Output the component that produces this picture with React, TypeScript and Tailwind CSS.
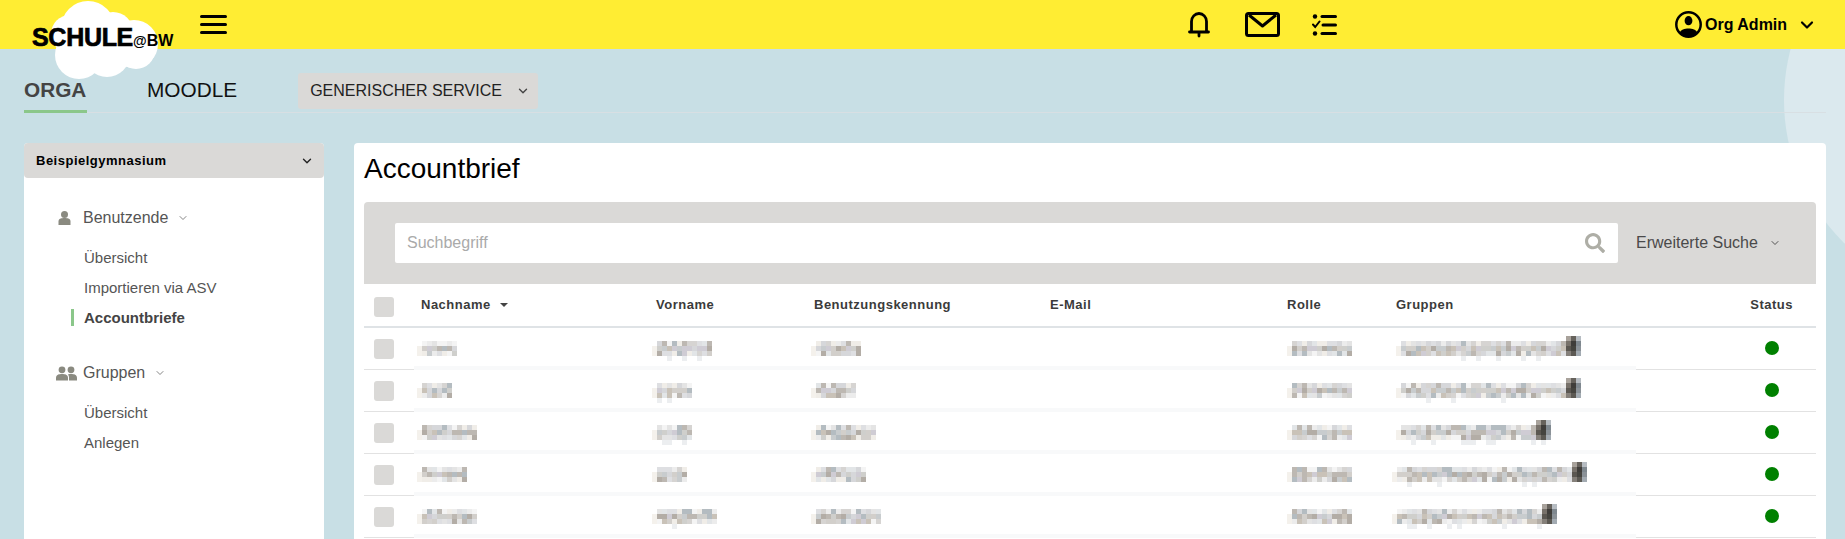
import { ChevronDown } from "lucide-react";
import { FaSearch } from "react-icons/fa";

/* ---- the blurred-out cells are a pixel mosaic in the screenshot ---- */
const MOSAIC = ["#bdb8b2", "#c8ccce", "#d2cfcb", "#b4bcc1", "#cfcfcc", "#c9c2b8", "#d6d7da", "#cfccd4", "#b3ada6"];
const FAINT = ["#f4f4f4", "#ececec", "#e4e4e4", "#dedfe2", "#f0ede8", "#e2e5e7", "#d6d4d2"];
const PATCH = [
  ["#a8a29b", "#77716a", "#5b5751", "#85807a"],
  ["#66625c", "#3f3d3a", "#45443f", "#5c5953"],
  ["#b6bcc2", "#7f888f", "#8b9298", "#a3abb2"],
];

function Mosaic({ width, seed, dark = false, descender = false }: { width: number; seed: number; dark?: boolean; descender?: boolean }) {
  const cols = Math.round(width / 5);
  const rects = [];
  let s = seed * 7919 + 13;
  const next = () => {
    s = (s * 16807 + 11) % 2147483647;
    return s;
  };
  for (let c = 0; c < cols; c++) {
    const patchCol = dark ? c - (cols - 3) : -1;
    for (let r = 0; r < 5; r++) {
      const n = (next() >> 4) & 0xffff;
      let fill = "";
      if (patchCol >= 0 && r < 4) fill = PATCH[patchCol][r];
      else if (c === 0) fill = r === 2 || r === 3 ? "#f4f1ec" : "";
      else if (r === 2) fill = MOSAIC[n % MOSAIC.length];
      else if (r === 1) fill = n % 3 === 0 ? MOSAIC[n % MOSAIC.length] : FAINT[n % FAINT.length];
      else if (r === 3) fill = n % 2 === 0 ? MOSAIC[n % MOSAIC.length] : FAINT[n % FAINT.length];
      else if (r === 4 && descender && n % 6 === 0) fill = "#eceef0";
      if (fill) rects.push(<rect key={`${c}-${r}`} x={c * 5} y={r * 5} width={5} height={5} fill={fill} />);
    }
  }
  return (
    <svg width={cols * 5} height={25} shapeRendering="crispEdges" className="block">
      {rects}
    </svg>
  );
}

const ROWS = [
  { last: 40, first: 60, login: 50, group: 186, groupOffset: 4 },
  { last: 35, first: 40, login: 45, group: 186, groupOffset: 4 },
  { last: 60, first: 40, login: 65, group: 156, groupOffset: 4 },
  { last: 50, first: 35, login: 55, group: 195, groupOffset: 0 },
  { last: 60, first: 65, login: 70, group: 165, groupOffset: 0 },
];

function Cloud() {
  return (
    <svg width="125" height="80" viewBox="40 0 125 80" className="absolute left-[40px] top-0">
      <g fill="#ffffff">
        <circle cx="88" cy="28" r="27" />
        <circle cx="113" cy="32" r="20" />
        <circle cx="134" cy="44" r="24" />
        <circle cx="70" cy="34" r="19" />
        <circle cx="79" cy="55" r="24" />
        <circle cx="107" cy="54" r="23" />
        <circle cx="136" cy="50" r="19" />
      </g>
    </svg>
  );
}

function Logo() {
  return (
    <div className="absolute left-0 top-0 h-[80px] w-[180px]">
      <Cloud />
      <div className="absolute left-[32px] top-[22px] flex items-baseline text-black">
        <span className="text-[25px] leading-[30px] font-bold tracking-[-0.3px] [-webkit-text-stroke:0.7px_black]">SCHULE</span>
        <span className="text-[14px] font-bold">@</span>
        <span className="text-[16px] font-bold">BW</span>
      </div>
    </div>
  );
}

function BellIcon() {
  return (
    <svg width="22" height="26" viewBox="0 0 22 26" fill="none" stroke="#000" strokeWidth="2.8" strokeLinecap="round">
      <path d="M3.5 19 V9.5 a7.5 8 0 0 1 15 0 V19" />
      <path d="M1.5 20 H20.5" />
      <path d="M11 21 V24" />
    </svg>
  );
}

function MailIcon() {
  return (
    <svg width="35" height="25" viewBox="0 0 35 25" fill="none" stroke="#000" strokeWidth="3" strokeLinejoin="round">
      <rect x="1.5" y="1.5" width="32" height="22" rx="2" />
      <path d="M4 3 L17.5 14 L31 3" />
    </svg>
  );
}

function ChecklistIcon() {
  return (
    <svg width="25" height="22" viewBox="0 0 25 22" fill="none" stroke="#000" strokeWidth="3" strokeLinecap="round">
      <circle cx="3" cy="2.5" r="2.2" fill="#000" stroke="none" />
      <path d="M10 2.5 H23.5" />
      <path d="M1 10.5 L3.2 13 L7.5 7.5" strokeWidth="2" />
      <path d="M11 11 H23.5" />
      <circle cx="3" cy="19.5" r="2.2" fill="#000" stroke="none" />
      <path d="M10 19.5 H23.5" />
    </svg>
  );
}

function UserCircleIcon() {
  return (
    <svg width="27" height="27" viewBox="0 0 25 25">
      <circle cx="12.5" cy="12.5" r="11.3" fill="none" stroke="#000" strokeWidth="2.3" />
      <ellipse cx="12.5" cy="9" rx="3.6" ry="4.3" fill="#000" />
      <path d="M4.5 20 C6 15 19 15 20.5 20 C17 25 8 25 4.5 20 Z" fill="#000" />
    </svg>
  );
}

function PersonIcon() {
  return (
    <svg width="13" height="14" viewBox="0 0 13 14" fill="#8a8a80" className="mr-[12px]">
      <ellipse cx="6.5" cy="3.5" rx="3.5" ry="3.5" />
      <path d="M0.5 14 V10.5 C0.5 7.5 3 7 6.5 7 C10 7 12.5 7.5 12.5 10.5 V14 Z" />
    </svg>
  );
}

function PeopleIcon() {
  return (
    <svg width="21" height="15" viewBox="0 0 21 15" fill="#8a8a80" className="mr-[6px]">
      <circle cx="6" cy="3.8" r="3.4" />
      <circle cx="15" cy="3.8" r="3.4" />
      <path d="M0 14.5 V12 C0 8.5 3 8 6 8 C9 8 12 8.5 12 12 V14.5 Z" />
      <path d="M13 14.5 V11.5 C13 10 12.5 9 11.8 8.4 C13 8 14 8 15 8 C18 8 21 8.5 21 12 V14.5 Z" />
    </svg>
  );
}

function SideGroup({ icon, title, children }: { icon: React.ReactNode; title: string; children: React.ReactNode }) {
  return (
    <div className="mt-[28px]">
      <div className="flex h-[24px] items-center text-[16px] text-[#555]">
        <span className="flex w-[59px] justify-end">{icon}</span>
        <span>{title}</span>
        <ChevronDown className="ml-[9px] h-[12px] w-[12px] text-[#777]" strokeWidth={1.8} />
      </div>
      <ul className="mt-[13px]">{children}</ul>
    </div>
  );
}

function SideLink({ label, active = false }: { label: string; active?: boolean }) {
  return (
    <li className="relative flex h-[30px] items-center pl-[60px] text-[15px] text-[#555]">
      {active && <span className="absolute left-[47px] top-[6px] h-[17px] w-[3px] bg-[#8bc78a]" />}
      <span className={active ? "font-bold text-[#444]" : ""}>{label}</span>
    </li>
  );
}

function TableHead() {
  return (
    <div className="flex h-[44px] items-center border-b-2 border-[#dfe3e6] text-[13px] font-bold tracking-[0.5px] text-[#3b3b3b]">
      <div className="w-[57px] shrink-0 pl-[10px]">
        <div className="mt-[3px] h-[20px] w-[20px] rounded-[3px] bg-[#dad9d7]" />
      </div>
      <div className="grid flex-1 grid-cols-[235px_158px_236px_237px_109px_1fr] items-center">
        <div className="flex items-center">
          Nachname
          <span className="ml-[9px] border-x-[4px] border-t-[4px] border-x-transparent border-t-[#444]" />
        </div>
        <div>Vorname</div>
        <div>Benutzungskennung</div>
        <div>E-Mail</div>
        <div>Rolle</div>
        <div className="flex justify-between pr-[23px]">
          <span>Gruppen</span>
          <span>Status</span>
        </div>
      </div>
    </div>
  );
}

function TableRow({ row, index }: { row: (typeof ROWS)[number]; index: number }) {
  return (
    <div className="flex h-[42px]">
      <div className="flex w-[50px] shrink-0 items-center border-b border-[#e2e2e2] pl-[10px]">
        <div className="h-[20px] w-[20px] rounded-[3px] bg-[#dad9d7]" />
      </div>
      <div className="grid flex-1 grid-cols-[235px_159px_238px_238px_105px_1fr] border-b-4 border-[#f8f9fa] pl-[3px] pt-[8px]">
        <Mosaic width={row.last} seed={index * 10 + 1} />
        <Mosaic width={row.first} seed={index * 10 + 2} descender />
        <Mosaic width={row.login} seed={index * 10 + 3} />
        <div />
        <Mosaic width={65} seed={index * 10 + 4} />
        <div className={row.groupOffset ? "pl-[4px]" : ""}>
          <Mosaic width={row.group} seed={index * 10 + 5} dark descender />
        </div>
      </div>
      <div className="flex w-[180px] shrink-0 items-center justify-end border-b border-[#e2e2e2] pb-[1px] pr-[37px]">
        <span className="h-[14px] w-[14px] rounded-full bg-[#008000]" />
      </div>
    </div>
  );
}

export default function App() {
  return (
    <div className="relative h-[539px] overflow-hidden bg-[#c8dfe5] font-['Liberation_Sans',Arial,sans-serif]">
      {/* decorative light circle behind the panel */}
      <div className="absolute left-[1784px] top-[-100px] h-[400px] w-[400px] rounded-full bg-[#dbe9ee]" />

      <header className="relative flex h-[49px] items-center bg-[#ffed33] pl-[200px]">
        <div className="flex h-[19px] w-[27px] flex-col justify-between">
          <span className="h-[3px] rounded-full bg-black" />
          <span className="h-[3px] rounded-full bg-black" />
          <span className="h-[3px] rounded-full bg-black" />
        </div>
        <div className="ml-[961px] flex items-center">
          <BellIcon />
          <div className="ml-[35px]">
            <MailIcon />
          </div>
          <div className="ml-[32px]">
            <ChecklistIcon />
          </div>
        </div>
        <div className="ml-[338px] flex items-center">
          <UserCircleIcon />
          <span className="ml-[3px] text-[16px] font-bold text-black">Org Admin</span>
          <ChevronDown className="ml-[10px] h-[20px] w-[20px] text-black" strokeWidth={2.6} />
        </div>
      </header>

      <Logo />

      <nav className="relative ml-6 mr-[19px] flex h-[64px] items-end border-b border-[#d8dfe3]">
        <div className="-mb-px h-[40px] w-[63px] border-b-[3px] border-[#8bc78a] text-[20.8px] leading-[34px] font-bold text-[#444]">ORGA</div>
        <div className="ml-[60px] h-[40px] text-[20.8px] leading-[35px] text-[#111]">MOODLE</div>
        <div className="mb-[3px] ml-[61px] flex h-[36px] w-[240px] items-center rounded-[3px] bg-[#dad9d7] pl-[12px] text-[16px] text-[#222]">
          GENERISCHER SERVICE
          <ChevronDown className="ml-[14px] h-[14px] w-[14px] text-[#444]" strokeWidth={2.4} />
        </div>
      </nav>

      <div className="relative mt-[30px] flex gap-[30px] pl-6 pr-[19px]">
        <aside className="h-[500px] w-[300px] shrink-0 rounded-t-[4px] bg-white">
          <div className="flex h-[35px] items-center justify-between rounded-[4px] bg-[#dad9d7] pl-[12px] pr-[10px] text-[13px] font-bold tracking-[0.5px] text-black">
            Beispielgymnasium
            <ChevronDown className="h-[14px] w-[14px] text-[#222]" strokeWidth={2.4} />
          </div>
          <SideGroup icon={<PersonIcon />} title="Benutzende">
            <SideLink label="Übersicht" />
            <SideLink label="Importieren via ASV" />
            <SideLink label="Accountbriefe" active />
          </SideGroup>
          <SideGroup icon={<PeopleIcon />} title="Gruppen">
            <SideLink label="Übersicht" />
            <SideLink label="Anlegen" />
          </SideGroup>
        </aside>

        <main className="h-[500px] min-w-0 flex-1 rounded-t-[4px] bg-white px-[10px]">
          <h1 className="h-[59px] pt-[9px] text-[28px] leading-[34px] text-black">Accountbrief</h1>
          <div className="flex h-[82px] items-center rounded-t-[4px] bg-[#dad9d7] pl-[31px]">
            <div className="flex h-[40px] flex-1 items-center justify-between rounded-[2px] bg-white pl-[12px] pr-[13px] text-[16px] text-[#aaa]">
              Suchbegriff
              <FaSearch className="h-[20px] w-[20px] text-[#aeaea6]" />
            </div>
            <div className="flex w-[198px] shrink-0 items-center pl-[18px] text-[16px] text-[#4a4a4a]">
              Erweiterte Suche
              <ChevronDown className="ml-[11px] h-[12px] w-[12px] text-[#444]" strokeWidth={1.8} />
            </div>
          </div>
          <TableHead />
          {ROWS.map((row, i) => (
            <TableRow key={i} row={row} index={i} />
          ))}
        </main>
      </div>
    </div>
  );
}
